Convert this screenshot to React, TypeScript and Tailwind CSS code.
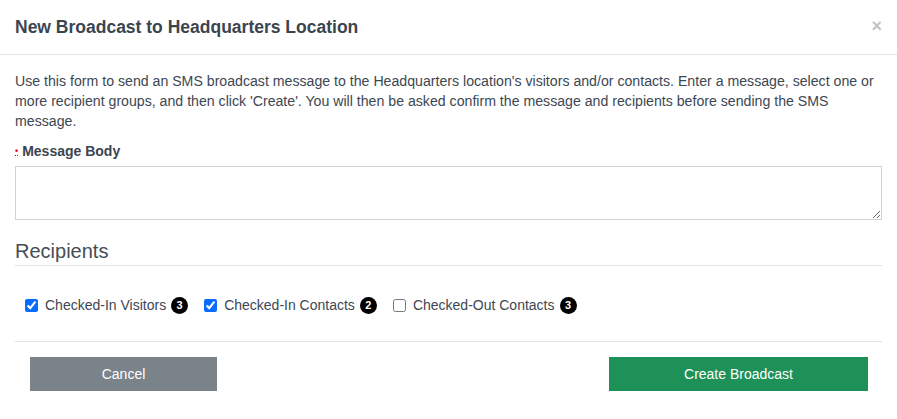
import React, { useState } from 'react';

const Badge = ({ n }: { n: number }) => (
    <span className="ml-[5px] inline-flex h-[17px] w-[17px] items-center justify-center rounded-full bg-black text-[11px] font-bold leading-none text-white">
        {n}
    </span>
);

const groups = [
    { id: 'ci-visitors', label: 'Checked-In Visitors', count: 3, checked: true },
    { id: 'ci-contacts', label: 'Checked-In Contacts', count: 2, checked: true },
    { id: 'co-contacts', label: 'Checked-Out Contacts', count: 3, checked: false },
];

export default function App() {
    const [picked, setPicked] = useState<Record<string, boolean>>(
        Object.fromEntries(groups.map((g) => [g.id, g.checked]))
    );
    const [body, setBody] = useState('');

    return (
        <div className="h-[419px] w-full bg-white text-[#3d4752]" style={{ fontFamily: '"Liberation Sans", Arial, sans-serif' }}>
            <div className="flex h-[55px] items-center justify-between border-b border-[#dee2e6] pl-[15px] pr-[15px]">
                <h2 className="text-[17.5px] font-bold text-[#3b4550]">New Broadcast to Headquarters Location</h2>
                <button className="-mt-[3px] text-[18px] font-bold leading-none text-[#c4c4c4]">×</button>
            </div>

            <div className="px-[15px] pt-[16px]">
                <p className="text-[14.15px] leading-[20px]">
                    Use this form to send an SMS broadcast message to the Headquarters location's visitors and/or contacts. Enter a message, select one or more recipient groups, and then click 'Create'. You will then be asked confirm the message and recipients before sending the SMS message.
                </p>

                <label className="mt-[10px] flex items-center text-[14px] font-bold leading-[20px] text-[#3b4550]">
                    <span className="mr-[4px] text-[9px] leading-none text-red-600 underline decoration-dotted">•</span>
                    Message Body
                </label>
                <textarea
                    value={body}
                    onChange={(e) => setBody(e.target.value)}
                    className="mt-[5px] block h-[54px] w-full border border-[#cdd4dc] px-2 py-1 text-[14px] outline-none"
                />

                <h3 className="mt-[19px] border-b border-[#dee2e6] pb-[2px] text-[20px] leading-[24px] text-[#454d55]">Recipients</h3>

                <div className="flex h-[76px] items-center gap-[16px] border-b border-[#dee2e6] pl-[10px] pt-[3px]">
                    {groups.map((g) => (
                        <label key={g.id} className="flex items-center text-[14px] text-[#3d4752]">
                            <input
                                type="checkbox"
                                checked={picked[g.id]}
                                onChange={() => setPicked({ ...picked, [g.id]: !picked[g.id] })}
                                className="mr-[7px] h-[13px] w-[13px] accent-[#0a6cff]"
                            />
                            {g.label}
                            <Badge n={g.count} />
                        </label>
                    ))}
                </div>
            </div>

            <div className="flex justify-between pl-[30px] pr-[29px] pt-[15px]">
                <button className="h-[34px] w-[187px] bg-[#7b838a] text-[14px] text-white">Cancel</button>
                <button className="h-[34px] w-[259px] bg-[#1d9157] text-[14px] text-white">Create Broadcast</button>
            </div>
        </div>
    );
}
